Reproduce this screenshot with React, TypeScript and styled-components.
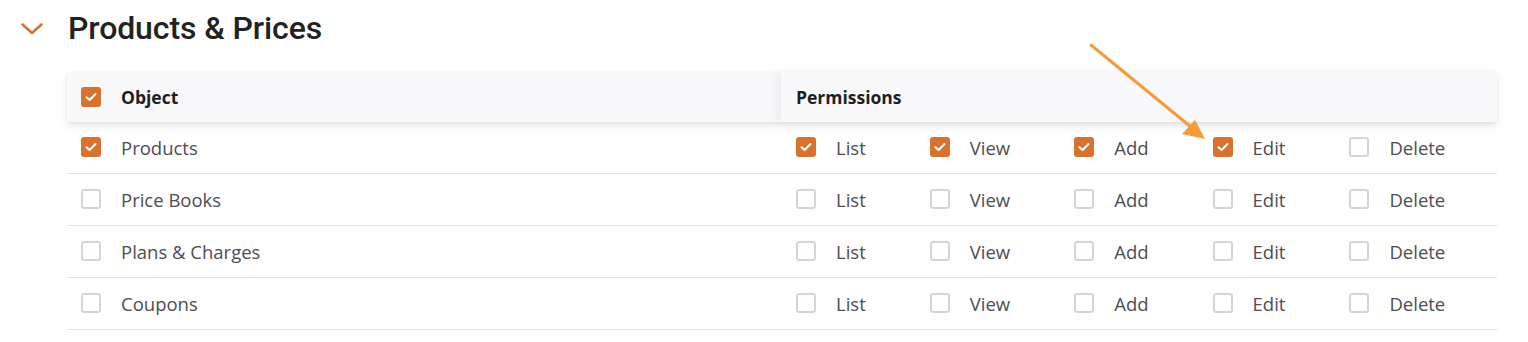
import React from 'react'
import styled, { createGlobalStyle } from 'styled-components'

type Perm = 'List' | 'View' | 'Add' | 'Edit' | 'Delete'

const PERMS: Perm[] = ['List', 'View', 'Add', 'Edit', 'Delete']

const rows: { name: string; checked: boolean; perms: Perm[] }[] = [
  { name: 'Products', checked: true, perms: ['List', 'View', 'Add', 'Edit'] },
  { name: 'Price Books', checked: false, perms: [] },
  { name: 'Plans & Charges', checked: false, perms: [] },
  { name: 'Coupons', checked: false, perms: [] },
]

function CheckBox({ checked }: { checked: boolean }) {
  return (
    <Box $checked={checked}>
      {checked && (
        <svg width="12" height="10" viewBox="0 0 12 10">
          <path d="M1.5 5.2 L4.6 8 L10.5 2" fill="none" stroke="#fff" strokeWidth="2" strokeLinecap="round" strokeLinejoin="round" />
        </svg>
      )}
    </Box>
  )
}

export default function App() {
  return (
    <>
      <GlobalStyle />
      <Page>
        <SectionHead>
          <svg width="22" height="12" viewBox="0 0 22 12">
            <path d="M1.5 1.5 L11 10 L20.5 1.5" fill="none" stroke="#d8722f" strokeWidth="2.6" strokeLinecap="round" strokeLinejoin="round" />
          </svg>
          <Title>Products &amp; Prices</Title>
        </SectionHead>

        <Table>
          <HeadRow>
            <HeadCell>
              <CheckBox checked />
              <span>Object</span>
            </HeadCell>
            <HeadCell $shadow>
              <span>Permissions</span>
            </HeadCell>
          </HeadRow>
          {rows.map((r) => (
            <Row key={r.name}>
              <Cell>
                <CheckBox checked={r.checked} />
                <Label>{r.name}</Label>
              </Cell>
              <PermCell>
                {PERMS.map((p) => (
                  <PermItem key={p}>
                    <CheckBox checked={r.perms.includes(p)} />
                    <Label>{p}</Label>
                  </PermItem>
                ))}
              </PermCell>
            </Row>
          ))}
        </Table>

        <Arrow width="130" height="110" viewBox="0 0 130 110">
          <line x1="4" y1="3" x2="104" y2="85" stroke="#f39c38" strokeWidth="3" strokeLinecap="round" />
          <polygon points="118,97 95,92 108,78" fill="#f39c38" />
        </Arrow>
      </Page>
    </>
  )
}

const GlobalStyle = createGlobalStyle`
  body {
    margin: 0;
    background: #fff;
    font-family: "Open Sans", "Noto Sans", sans-serif;
  }
`

const Page = styled.div`
  position: relative;
  width: 1528px;
  height: 342px;
  padding: 9px 31px 0 21px;
  box-sizing: border-box;
`

const SectionHead = styled.div`
  display: flex;
  align-items: center;
  gap: 25px;
  height: 38px;

  svg {
    margin-top: 2px;
  }
`

const Title = styled.h2`
  margin: 0;
  font-family: Roboto, "Liberation Sans", sans-serif;
  font-weight: 500;
  font-size: 32px;
  color: #222;
  letter-spacing: -0.1px;
`

const Table = styled.div`
  margin: 25px 0 0 46px;
  width: 1430px;
`

const HeadRow = styled.div`
  display: grid;
  grid-template-columns: 714px 1fr;
  height: 50px;
  background: #f9f9fb;
  box-shadow: 0 4px 8px rgba(0, 0, 0, 0.09), 0 1px 3px rgba(0, 0, 0, 0.05);
  position: relative;
  z-index: 1;
`

const HeadCell = styled.div<{ $shadow?: boolean }>`
  display: flex;
  align-items: center;
  gap: 20px;
  padding-left: ${(p) => (p.$shadow ? '15px' : '14px')};
  font-weight: 700;
  font-size: 17.5px;
  color: #1e1e22;
  background: #f9f9fb;
  box-shadow: ${(p) => (p.$shadow ? '-5px 0 8px rgba(0, 0, 0, 0.05)' : 'none')};
`

const Row = styled.div`
  display: grid;
  grid-template-columns: 714px 1fr;
  height: 51px;
  border-bottom: 1px solid #e3e3e8;
  padding-bottom: 1px;
  box-sizing: border-box;
  height: 52px;
`

const Cell = styled.div`
  display: flex;
  align-items: center;
  gap: 20px;
  padding-left: 14px;
`

const PermCell = styled.div`
  display: flex;
  align-items: center;
  gap: 64px;
  padding-left: 15px;
`

const PermItem = styled.div`
  display: flex;
  align-items: center;
  gap: 20px;
`

const Label = styled.span`
  font-size: 18.5px;
  color: #4d4d55;
`

const Box = styled.span<{ $checked: boolean }>`
  display: inline-flex;
  align-items: center;
  justify-content: center;
  flex: none;
  width: 20px;
  height: 20px;
  box-sizing: border-box;
  border-radius: 3px;
  background: ${(p) => (p.$checked ? '#d8722f' : '#fff')};
  border: ${(p) => (p.$checked ? 'none' : '2px solid #d4d4de')};
`

const Arrow = styled.svg`
  position: absolute;
  z-index: 2;
  left: 1087px;
  top: 42px;
  pointer-events: none;
`
